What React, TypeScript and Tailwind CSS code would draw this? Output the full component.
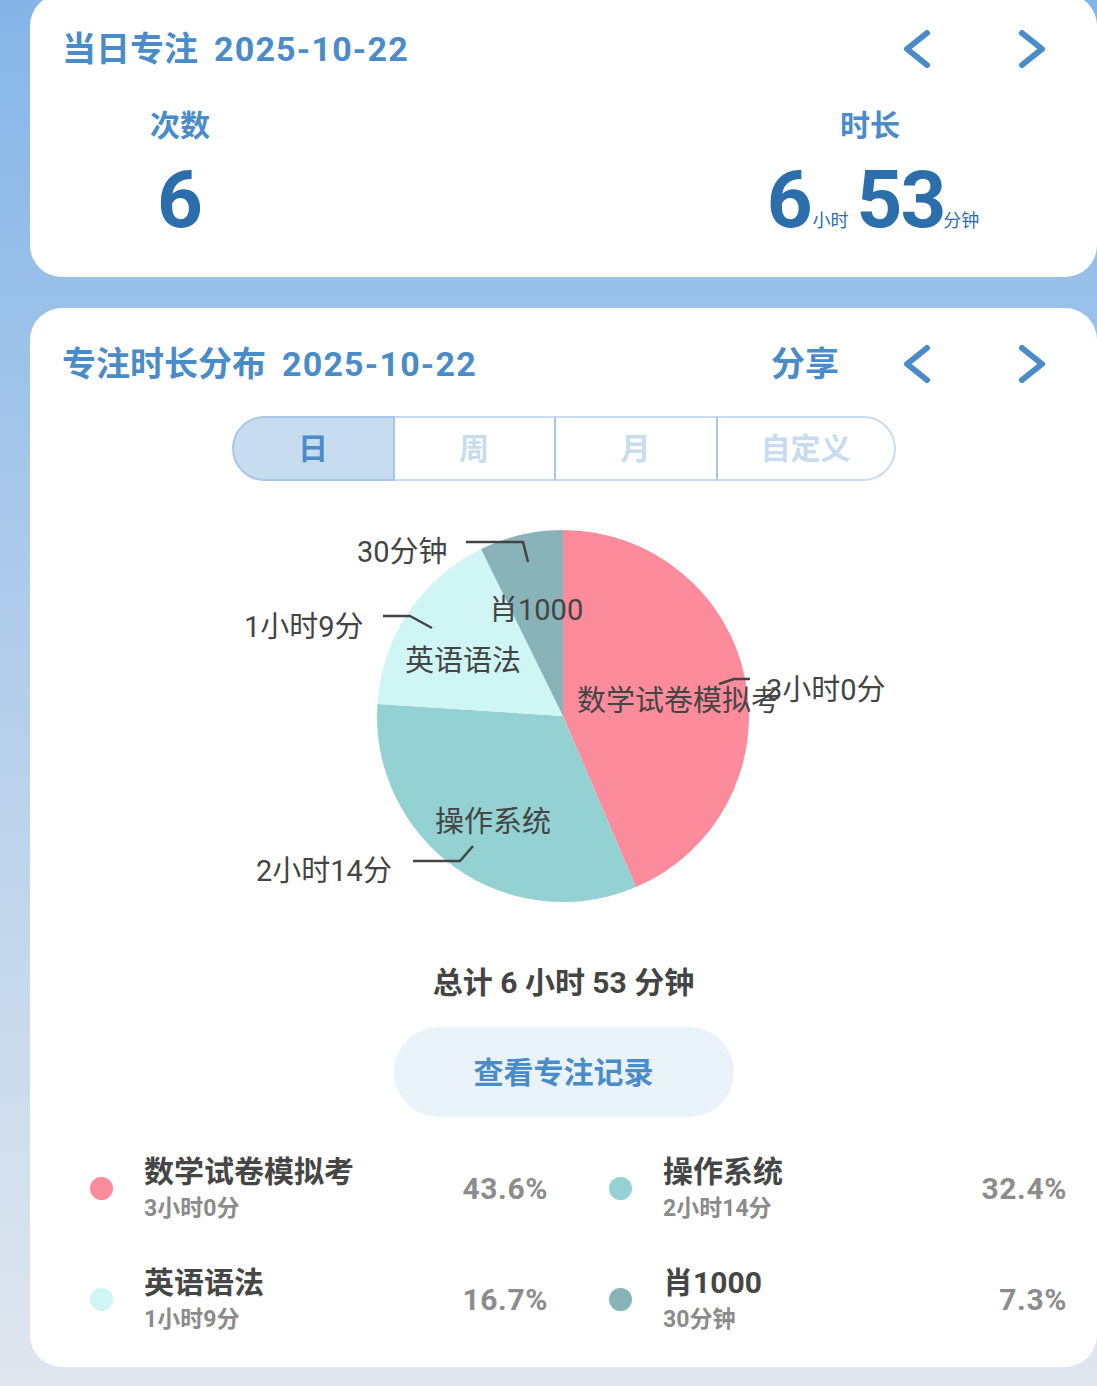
import React from "react";

const items = [
  { name: "数学试卷模拟考", time: "3小时0分", mins: 180, pct: "43.6%", color: "#fc8b9b" },
  { name: "操作系统", time: "2小时14分", mins: 134, pct: "32.4%", color: "#93d1d2" },
  { name: "英语语法", time: "1小时9分", mins: 69, pct: "16.7%", color: "#cff5f5" },
  { name: "肖1000", time: "30分钟", mins: 30, pct: "7.3%", color: "#88b3b8" },
];

const ChevronLeft = () => (
  <svg width="34" height="38" viewBox="0 0 34 38" fill="none">
    <path d="M27 3 L7 19 L27 35" stroke="#4a8bc9" strokeWidth="6" strokeLinecap="round" strokeLinejoin="round" />
  </svg>
);

const ChevronRight = () => (
  <svg width="34" height="38" viewBox="0 0 34 38" fill="none">
    <path d="M7 3 L27 19 L7 35" stroke="#4a8bc9" strokeWidth="6" strokeLinecap="round" strokeLinejoin="round" />
  </svg>
);

// pie drawn in card coords: x = page - 30, y = page - 481
const PieChart = () => {
  const cx = 533;
  const cy = 235;
  const r = 186;
  const total = items.reduce((s, i) => s + i.mins, 0);
  let start = 0;
  const pt = (a: number) => [cx + r * Math.sin(a), cy - r * Math.cos(a)];
  const slices = items.map((it) => {
    const a0 = start;
    const a1 = start + (it.mins / total) * Math.PI * 2;
    start = a1;
    const [x0, y0] = pt(a0);
    const [x1, y1] = pt(a1);
    const large = a1 - a0 > Math.PI ? 1 : 0;
    return (
      <path
        key={it.name}
        d={`M${cx} ${cy} L${x0} ${y0} A${r} ${r} 0 ${large} 1 ${x1} ${y1} Z`}
        fill={it.color}
      />
    );
  });
  const ox = -30;
  const oy = -481;
  const t = (x: number, y: number) => `${x + ox},${y + oy}`;
  return (
    <svg width="1067" height="450" viewBox="0 0 1067 450" className="block">
      {slices}
      <g stroke="#444" strokeWidth="2.5" fill="none" strokeLinejoin="round">
        <polyline points={`${t(719, 684)} ${t(734, 679)} ${t(750, 679)}`} />
        <polyline points={`${t(413, 861)} ${t(460, 861)} ${t(473, 846)}`} />
        <polyline points={`${t(383, 616)} ${t(410, 616)} ${t(432, 628)}`} />
        <polyline points={`${t(466, 542)} ${t(523, 542)} ${t(528, 562)}`} />
      </g>
      <g fill="#444" fontSize="29">
        <text x={577 + ox} y={711 + oy}>数学试卷模拟考</text>
        <text x={766 + ox} y={700 + oy}>3小时0分</text>
        <text x={435 + ox} y={832 + oy}>操作系统</text>
        <text x={256 + ox} y={881 + oy}>2小时14分</text>
        <text x={405 + ox} y={671 + oy}>英语语法</text>
        <text x={244 + ox} y={637 + oy}>1小时9分</text>
        <text x={489 + ox} y={620 + oy}>肖1000</text>
        <text x={357 + ox} y={562 + oy}>30分钟</text>
      </g>
    </svg>
  );
};

const tabs = [
  { label: "日", w: "w-[163px]", cls: "rounded-l-full border-2 border-[#a8c7e7] bg-[#c8dcf0] text-[#4a8bc9]" },
  { label: "周", w: "w-[161px]", cls: "border-y-2 border-r-2 border-y-[#c8dcf0] border-r-[#a8c7e7] text-[#c8dcf0]" },
  { label: "月", w: "w-[162px]", cls: "border-y-2 border-r-2 border-y-[#c8dcf0] border-r-[#a8c7e7] text-[#c8dcf0]" },
  { label: "自定义", w: "w-[178px]", cls: "rounded-r-full border-y-2 border-r-2 border-[#c8dcf0] text-[#c8dcf0]" },
];

export default function App() {
  return (
    <div className="min-h-[1386px] w-full overflow-hidden bg-gradient-to-b from-[#84b5e7] via-[#b4cfeb] to-[#e0e6ee] font-[Roboto,'Noto_Sans_CJK_SC',sans-serif]">
      {/* 当日专注 */}
      <div className="-mt-[6px] ml-[30px] h-[283px] w-[1067px] rounded-[32px] bg-white pt-[35px]">
        <div className="flex h-[40px] items-center pl-[32px] pr-[48px]">
          <h1 className="text-[34px] font-bold leading-[40px] text-[#4a8bc9]">
            当日专注<span className="ml-[16px] tracking-[1.2px]">2025-10-22</span>
          </h1>
          <div className="ml-auto flex items-center gap-[81px]">
            <ChevronLeft />
            <ChevronRight />
          </div>
        </div>
        <div className="mt-[40px] flex pl-[50px] pr-[77px]">
          <div className="flex w-[200px] flex-col items-center">
            <p className="text-[30px] font-bold leading-[34px] text-[#4a8bc9]">次数</p>
            <p className="mt-[17px] text-[80px] font-bold leading-[80px] text-[#2c6dac]">6</p>
          </div>
          <div className="ml-auto flex w-[300px] flex-col items-center">
            <p className="text-[30px] font-bold leading-[34px] text-[#4a8bc9]">时长</p>
            <div className="mt-[17px] flex items-baseline pl-[6px] text-[#2c6dac]">
              <span className="text-[80px] font-bold leading-[80px]">6</span>
              <span className="text-[18px] leading-[20px]">小时</span>
              <span className="ml-[8px] text-[80px] font-bold leading-[80px] tracking-[-2px]">53</span>
              <span className="ml-[-1px] text-[18px] leading-[20px]">分钟</span>
            </div>
          </div>
        </div>
      </div>

      {/* 专注时长分布 */}
      <div className="mt-[31px] ml-[30px] h-[1059px] w-[1067px] rounded-[32px] bg-white pt-[36px]">
        <div className="flex h-[40px] items-center pl-[32px] pr-[48px]">
          <h2 className="text-[34px] font-bold leading-[40px] text-[#4a8bc9]">
            专注时长分布<span className="ml-[16px] tracking-[1.2px]">2025-10-22</span>
          </h2>
          <span className="ml-auto text-[34px] font-bold leading-[40px] text-[#4a8bc9]">分享</span>
          <div className="ml-[61px] flex items-center gap-[81px]">
            <ChevronLeft />
            <ChevronRight />
          </div>
        </div>

        <div className="mt-[32px] flex h-[65px] justify-center">
          {tabs.map((t) => (
            <div
              key={t.label}
              className={`flex h-[65px] items-center justify-center text-[30px] font-bold ${t.w} ${t.cls}`}
            >
              {t.label}
            </div>
          ))}
        </div>

        <PieChart />

        <p className="mt-[34px] text-center text-[30px] font-bold leading-[36px] text-[#444]">
          总计 6 小时 53 分钟
        </p>

        <div className="mt-[26px] flex justify-center">
          <button className="flex h-[90px] w-[340px] items-center justify-center rounded-full bg-[#ebf3fa] text-[30px] font-bold text-[#4a8bc9]">
            查看专注记录
          </button>
        </div>

        <div className="mt-[37px] grid grid-cols-[458px_458px] gap-x-[61px] gap-y-[42px] pl-[60px]">
          {items.map((it) => (
            <div key={it.name} className="flex items-center">
              <span className="h-[23px] w-[23px] shrink-0 rounded-full" style={{ backgroundColor: it.color }} />
              <div className="ml-[31px] flex-1">
                <p className="text-[30px] font-bold leading-[36px] text-[#464646]">{it.name}</p>
                <p className="mt-[5px] text-[23px] font-bold leading-[28px] text-[#8b8b8b]">{it.time}</p>
              </div>
              <span className="text-[30px] font-bold tracking-[0.6px] text-[#8c8c8c]">{it.pct}</span>
            </div>
          ))}
        </div>
      </div>
    </div>
  );
}
